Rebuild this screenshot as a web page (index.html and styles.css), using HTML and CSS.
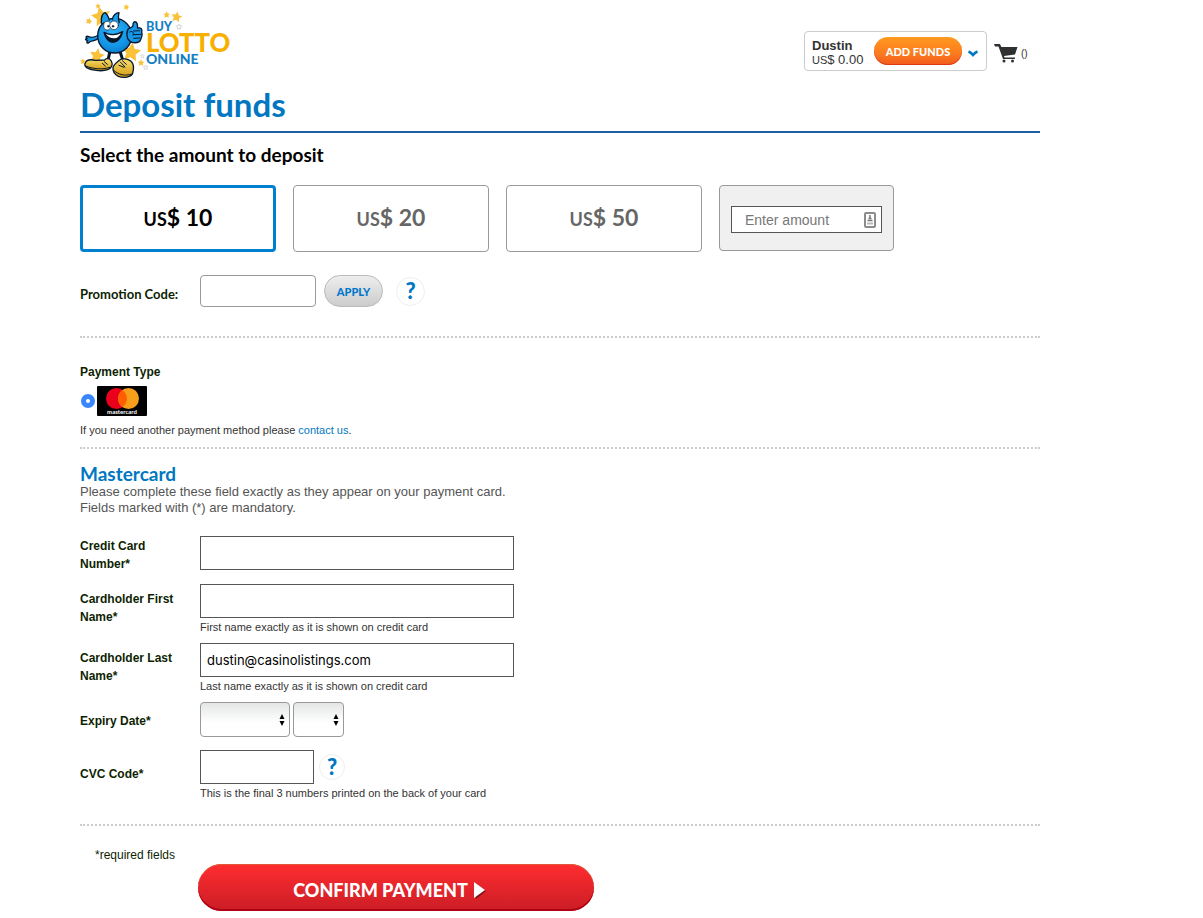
FILE: index.html
```html
<!DOCTYPE html>
<html lang="en">
<head>
<meta charset="utf-8">
<title>Deposit funds - Buy Lotto Online</title>
<link rel="stylesheet" href="styles.css">
</head>
<body>
<div class="page">
  <header class="header">
    <a class="logo" href="#" aria-label="Buy Lotto Online">
      <svg width="152" height="76" viewBox="30 9 456 228">
        <defs>
          <path id="star" d="M0-10 3-3.500 10-3 5 2.500 6.500 9.500 0 6-6.500 9.500-5 2.500-10-3-3-3.500Z"/>
          <radialGradient id="body" cx=".45" cy=".35" r=".7"><stop offset="0" stop-color="#2fb0f6"/><stop offset=".65" stop-color="#1496e6"/><stop offset="1" stop-color="#0878cc"/></radialGradient>
          <linearGradient id="shoe" x2="0" y2="1"><stop offset="0" stop-color="#fbe070"/><stop offset="1" stop-color="#d29a10"/></linearGradient>
        </defs>
        <g fill="#fac23a">
          <use href="#star" transform="translate(93 48) rotate(-12) scale(2.900)"/>
          <use href="#star" transform="translate(57 63) rotate(15) scale(1)"/>
          <use href="#star" transform="translate(84 18) scale(.8)"/>
          <use href="#star" transform="translate(169 21) rotate(10) scale(.9)"/>
          <use href="#star" transform="translate(81 166) rotate(12) scale(2.200)"/>
          <use href="#star" transform="translate(184 155) rotate(8) scale(2.800)"/>
          <use href="#star" transform="translate(39 184) scale(.9)"/>
          <use href="#star" transform="translate(290 44) scale(1)"/>
          <use href="#star" transform="translate(320 50) rotate(12) scale(1.600)"/>
          <use href="#star" transform="translate(213 188) scale(1)"/>
        </g>
        <g fill="#fff" stroke="#999" stroke-width="1.500">
          <use href="#star" transform="translate(327 80) scale(.8)"/>
          <use href="#star" transform="translate(217 168) scale(.6)"/>
          <use href="#star" transform="translate(227 202) scale(.7)"/>
        </g>
        <g stroke="#07182c" stroke-width="4" stroke-linejoin="round" stroke-linecap="round">
          <path d="M119 158 113 185M151 157 160 186" fill="none" stroke-width="9"/>
          <path d="M86 115C72 126 65 120 56 128 50 132 49 126 53 121 46 121 44 117 51 115 45 110 50 107 56 110 65 115 74 112 86 105Z" fill="#1598e8"/>
          <ellipse cx="134" cy="107" rx="51" ry="52" fill="url(#body)"/>
          <path d="M94 70C93 52 98 40 105 38 111 42 115 50 118 60M127 58C128 46 139 38 147 38 145 48 144 58 148 68" fill="#1a9fee"/>
          <ellipse cx="112" cy="77" rx="11" ry="13" fill="#fff" stroke-width="2"/>
          <ellipse cx="132" cy="76" rx="13" ry="13" fill="#fff" stroke-width="2"/>
          <circle cx="115" cy="79" r="3" fill="#07182c" stroke-width="1"/>
          <circle cx="129" cy="79" r="3" fill="#07182c" stroke-width="1"/>
          <path d="M102 97C121 107 140 106 158 95 153 116 140 128 127 127 113 125 106 112 102 97Z" fill="#07182c"/>
          <path d="M107 101C124 108 139 107 153 100 149 107 145 111 141 113 129 117 116 114 107 101Z" fill="#fff" stroke="none"/>
          <path d="M174 88C180 82 188 83 189 77 188 67 193 63 199 67 204 72 202 80 203 84 213 82 218 88 215 97 219 104 214 114 211 121 206 130 187 131 178 122 169 114 169 98 174 88Z" fill="#1598e8"/>
          <path d="M191 93 209 92M191 104 212 103M191 115 209 114M179 96C187 91 193 97 189 106" fill="none" stroke-width="3"/>
          <path d="M47 187C51 178 63 178 77 181L104 180C107 174 119 174 124 183 130 194 124 205 113 209 94 216 61 210 49 202 44 197 43 192 47 187Z" fill="url(#shoe)"/>
          <path d="M129 203C130 194 140 188 148 181 156 174 173 176 183 184 193 193 192 206 188 220 184 232 161 235 145 229 132 222 128 212 129 203Z" fill="url(#shoe)"/>
          <path d="M49 199C72 207 96 210 119 202M131 211C147 225 164 229 186 222M103 185 112 193M97 190 106 198M151 186 165 201M157 182 169 193M147 196 162 202" fill="none" stroke-width="3"/>
        </g>
        <text class="logo-blue" x="228" y="92" font-size="38">BUY</text>
        <text class="logo-gold" x="228" y="156" font-size="77">LOTTO</text>
        <text class="logo-blue" x="228" y="193" font-size="42">ONLINE</text>
      </svg>
    </a>
    <div class="account">
      <div class="wallet">
        <div class="balance"><strong>Dustin</strong><span><small>US</small>$ 0.00</span></div>
        <button class="add-funds" type="button">ADD FUNDS</button>
        <button class="menu-toggle" type="button" aria-label="Account menu">
          <svg width="12" height="8" viewBox="0 0 12 8"><path d="M1.500 1.500Q4 2.500 6 5Q8 2.500 10.500 1.500" fill="none" stroke="#0077c0" stroke-width="2.600"/></svg>
        </button>
      </div>
      <a class="cart" href="#" aria-label="Cart">
        <svg width="24" height="20" viewBox="0 0 24 20" fill="#303030"><path d="M0 1H6L7.300 4H23.500L21 11.500 10 13 10.500 14.500H21V16H9L4.500 3.500H1Z"/><circle cx="10" cy="18" r="1.500"/><circle cx="18.500" cy="18" r="1.500"/></svg>
        <span>()</span>
      </a>
    </div>
  </header>

  <main>
    <h1>Deposit funds</h1>
    <form>
      <h2>Select the amount to deposit</h2>
      <div class="amounts">
        <button class="amount selected" type="button"><small>US</small>$ 10</button>
        <button class="amount" type="button"><small>US</small>$ 20</button>
        <button class="amount" type="button"><small>US</small>$ 50</button>
        <div class="amount-other">
          <div class="amount-box">
            <input type="text" placeholder="Enter amount" aria-label="Enter amount">
            <svg width="12" height="16" viewBox="0 0 12 16"><rect x="1" y="1" width="10" height="14" rx="1" fill="#fff" stroke="#8c8c8c" stroke-width="2"/><path d="M6 3V7M4.500 6.500H7.500M3.500 8.500H8.500" stroke="#777" stroke-width="1.500"/><path d="M3 11.500H9" stroke="#bbb" stroke-width="2"/></svg>
          </div>
        </div>
      </div>

      <div class="promo">
        <label for="promo">Promotion Code:</label>
        <input id="promo" type="text">
        <button class="apply" type="button">APPLY</button>
        <button class="help" type="button">?</button>
      </div>

      <section class="payment">
        <h4>Payment Type</h4>
        <label class="method">
          <input type="radio" name="method" checked>
          <svg width="50" height="30" viewBox="0 0 50 30" role="img" aria-label="Mastercard"><rect width="50" height="30" rx="1"/><circle cx="19.500" cy="12.500" r="10.500" fill="#eb001b"/><circle cx="31.500" cy="12.500" r="10.500" fill="#f79e1b"/><path d="M25.500 3.900a10.500 10.500 0 0 1 0 17.200a10.500 10.500 0 0 1 0-17.200Z" fill="#ff5f00"/><text class="card-name" x="25" y="28" text-anchor="middle">mastercard</text></svg>
        </label>
        <p>If you need another payment method please <a href="#">contact us</a>.</p>
      </section>

      <section class="card">
        <h3>Mastercard</h3>
        <p>Please complete these field exactly as they appear on your payment card.<br>Fields marked with (*) are mandatory.</p>
        <div class="fields">
          <div class="row number-row">
            <label for="number">Credit Card Number*</label>
            <div><input class="wide" id="number" type="text"></div>
          </div>
          <div class="row">
            <label for="first">Cardholder First Name*</label>
            <div><input class="wide" id="first" type="text"><span class="hint">First name exactly as it is shown on credit card</span></div>
          </div>
          <div class="row">
            <label for="last">Cardholder Last Name*</label>
            <div><input class="wide" id="last" type="text" value="dustin@casinolistings.com"><span class="hint">Last name exactly as it is shown on credit card</span></div>
          </div>
          <div class="row expiry-row">
            <label for="month">Expiry Date*</label>
            <div class="controls expiry">
              <span class="select month"><select id="month"><option></option></select><svg width="6" height="12" viewBox="0 0 6 12"><path d="M3 0 5.500 5H.5ZM.5 7H5.500L3 12Z"/></svg></span>
              <span class="select"><select aria-label="Expiry year"><option></option></select><svg width="6" height="12" viewBox="0 0 6 12"><path d="M3 0 5.500 5H.5ZM.5 7H5.500L3 12Z"/></svg></span>
            </div>
          </div>
          <div class="row cvc-row">
            <label for="cvc">CVC Code*</label>
            <div><div class="controls"><input class="short" id="cvc" type="text"><button class="help small" type="button">?</button></div><span class="hint">This is the final 3 numbers printed on the back of your card</span></div>
          </div>
        </div>
      </section>

      <p class="required">*required fields</p>
      <button class="confirm" type="submit">CONFIRM PAYMENT <svg width="12" height="18" viewBox="0 0 12 18"><path d="M1 2 12 10 2 18Z" fill="#7d1218"/><path d="M0 1 11 9 0 17Z" fill="#fff"/></svg></button>
    </form>
  </main>
</div>
</body>
</html>
```
FILE: styles.css
```css
* { box-sizing: border-box; }
body {
  margin: 0;
  background: #fff;
  color: #333;
  font-family: "Liberation Sans", Arial, sans-serif;
}
h1, h2, h3, h4, p { margin: 0; }
button, input, select { font-family: inherit; margin: 0; }
button { cursor: pointer; padding: 0; }
svg { display: block; flex: none; }
a { color: #0077c0; text-decoration: none; }
.page { max-width: 960px; margin-left: 80px; }

.header {
  display: flex;
  justify-content: space-between;
  height: 84px;
  padding: 3px 12px 0 0;
}
.logo-blue, .logo-gold { font-family: Lato, sans-serif; font-weight: 900; }
.logo-blue { fill: #1680c4; }
.logo-gold { fill: #f8b000; }
.account { display: flex; gap: 7px; padding-top: 28px; }
.wallet {
  display: flex;
  align-items: center;
  width: 183px;
  height: 40px;
  padding: 0 7px;
  border: 1px solid #ccc;
  border-radius: 4px;
}
.balance {
  display: flex;
  flex-direction: column;
  width: 62px;
  font-size: 13px;
  line-height: 14px;
  padding-top: 3px;
}
.balance small { font-size: 11px; }
.add-funds {
  width: 88px;
  height: 28px;
  border: 0;
  border-radius: 14px;
  background: linear-gradient(#ff9a20, #fb7a1e 60%, #f25a1e);
  box-shadow: inset 0 -1px 0 #dc3c14;
  color: #fff;
  font: 900 11px Lato, sans-serif;
}
.menu-toggle { margin-left: 5px; padding-top: 6px; border: 0; background: none; }
.cart {
  display: flex;
  align-items: center;
  gap: 3px;
  width: 34px;
  height: 44px;
  color: #333;
  font-size: 10px;
}

h1 {
  height: 49px;
  padding-top: 2px;
  border-bottom: 2px solid #1f5fa3;
  color: #0077c0;
  font: 700 33px/36px Lato, sans-serif;
}
h2 { padding-top: 10px; color: #000; font: 700 19px/24px Lato, sans-serif; }
.amounts { display: flex; gap: 17px; padding-top: 18px; }
.amount {
  width: 196px;
  height: 67px;
  padding-bottom: 3px;
  border: 1px solid #999;
  border-radius: 4px;
  background: #fff;
  color: #666;
  font: 700 23px Lato, sans-serif;
}
.amount small { font-size: 18px; }
.amount.selected { border: 3px solid #0080d0; color: #000; }
.amount-other {
  width: 175px;
  height: 66px;
  padding: 20px 11px;
  border: 1px solid #999;
  border-radius: 4px;
  background: #f0f0f0;
}
.amount-box {
  display: flex;
  align-items: center;
  height: 27px;
  padding: 0 5px 0 13px;
  border: 1px solid #555;
  background: #fff;
}
.amount-box input {
  flex: 1;
  min-width: 0;
  padding: 0;
  border: 0;
  background: none;
  font-size: 14px;
}
.amount-box input::placeholder { color: #777; }

.promo {
  display: flex;
  align-items: center;
  height: 86px;
  padding: 23px 0 29px;
  border-bottom: 2px dotted #ccc;
}
.promo label {
  width: 120px;
  padding-top: 6px;
  color: #0e1f03;
  font: 700 13px Lato, sans-serif;
}
.promo input { width: 116px; height: 32px; border: 1px solid #999; border-radius: 4px; }
.apply {
  width: 59px;
  height: 32px;
  margin: 0 13px 0 8px;
  border: 1px solid #bbb;
  border-radius: 16px;
  background: linear-gradient(#eee, #ccc);
  color: #0077cc;
  font: 900 11px Lato, sans-serif;
}
.help {
  width: 29px;
  height: 29px;
  border: 1px solid #eee;
  border-radius: 50%;
  background: #fff;
  color: #0077c0;
  font: 900 22px/24px Lato, sans-serif;
}
.help.small { width: 26px; height: 26px; margin-left: 5px; }

.payment { padding: 25px 0 8px; border-bottom: 2px dotted #ccc; }
.payment h4 { color: #0e1f03; font-size: 12px; line-height: 18px; }
.method { display: flex; align-items: center; gap: 2px; padding: 5px 0 5px 1px; }
.method input {
  appearance: none;
  width: 14px;
  height: 14px;
  border: 5px solid #3a86fa;
  border-radius: 50%;
  background: #fff;
}
.card-name { fill: #fff; font: 700 6px Lato, sans-serif; }
.payment p { font-size: 11px; line-height: 18px; }

.card { padding: 14px 0 22px; border-bottom: 2px dotted #ccc; }
.card h3 { color: #0077c0; font: 700 19px/21px Lato, sans-serif; }
.card p { color: #555; font-size: 13px; line-height: 16px; }
.fields { padding-top: 20px; }
.row {
  display: grid;
  grid-template-columns: 120px 1fr;
  align-items: start;
  padding-bottom: 7px;
}
.row label {
  padding: 6px 20px 0 0;
  color: #0e1f03;
  font-size: 12px;
  font-weight: 700;
  line-height: 18px;
}
.number-row { padding-bottom: 11px; }
.number-row label { padding-top: 1px; }
.expiry-row { padding-bottom: 13px; }
.expiry-row label { padding-top: 10px; }
.cvc-row { padding-bottom: 0; }
.cvc-row label { padding-top: 15px; }
.row input {
  display: block;
  height: 34px;
  padding: 0 6px;
  border: 1px solid #555;
  background: #fff;
  color: #000;
  font: 13px Inter, sans-serif;
}
.wide { width: 100%; max-width: 314px; }
.short { width: 114px; }
.hint { display: block; font-size: 11px; line-height: 18px; }
.controls { display: flex; align-items: center; }
.expiry { gap: 3px; }
.select { display: grid; align-items: center; width: 51px; }
.select.month { width: 90px; }
.select select, .select svg { grid-area: 1 / 1; }
.select svg { justify-self: end; margin-right: 5px; pointer-events: none; }
.select select {
  appearance: none;
  width: 100%;
  height: 35px;
  border: 1px solid #999;
  border-radius: 4px;
  background: linear-gradient(#e4e6e6, #fff 60%);
}

.required { padding: 20px 0 0 15px; color: #0e1f03; font-size: 12px; line-height: 18px; }
.confirm {
  display: flex;
  align-items: center;
  justify-content: center;
  gap: 6px;
  width: 396px;
  height: 47px;
  margin-left: 118px;
  padding: 4px 13px 0 0;
  border: 0;
  border-radius: 24px;
  background: linear-gradient(#ff2d30, #cb1d26);
  box-shadow: inset 0 -2px 0 #b00012, inset 0 1px 0 #e0593a;
  color: #fff;
  font: 900 18px Lato, sans-serif;
}
```
